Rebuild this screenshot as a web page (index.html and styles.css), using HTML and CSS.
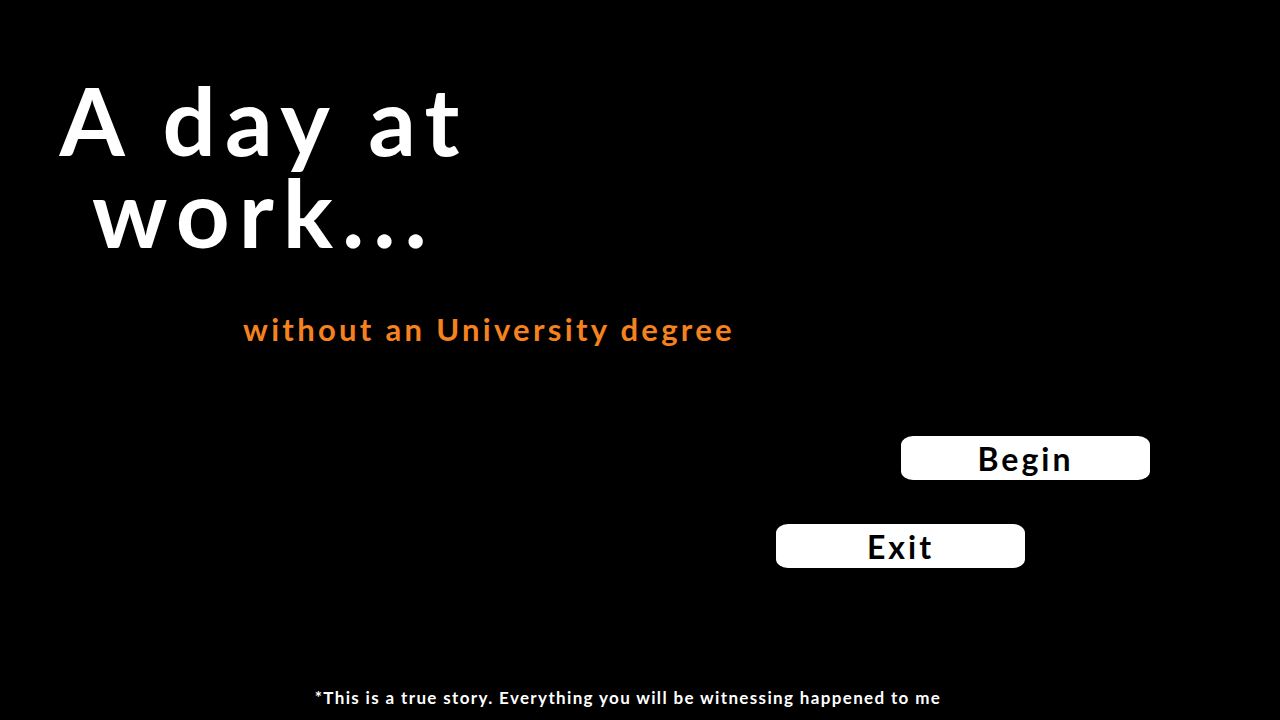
FILE: index.html
```html
<!DOCTYPE html>
<html lang="en">
<head>
  <meta charset="UTF-8">
  <meta name="viewport" content="width=device-width, initial-scale=1">
  <title>A day at work...</title>
  <link rel="stylesheet" href="styles.css">
</head>
<body>

  <main class="title-screen">
    <h1 class="title">A day at<br>work...</h1>
    <p class="subtitle">without an University degree</p>

    <div class="menu">
      <button class="menu-btn begin-btn">Begin</button>
      <button class="menu-btn exit-btn">Exit</button>
    </div>

    <p class="footnote">*This is a true story. Everything you will be witnessing happened to me</p>
  </main>

</body>
</html>
```

FILE: styles.css
```css
* {
  box-sizing: border-box;
}

body {
  margin: 0;
  background: #000;
  font-family: 'Lato', 'Noto Sans', sans-serif;
  color: #fff;
}

.title-screen {
  height: 100vh;
  display: flex;
  flex-direction: column;
  align-items: flex-start;
  padding-top: 74px;
}

.title {
  margin: 0 0 0 56px;
  width: 416px;
  font-size: 94px;
  font-weight: 700;
  line-height: 92px;
  letter-spacing: 9px;
  text-align: center;
}

.subtitle {
  margin: 52px 0 0 243px;
  font-size: 31px;
  font-weight: 700;
  letter-spacing: 3.3px;
  color: #f5821f;
}

.menu {
  display: flex;
  flex-direction: column;
  gap: 44px;
  margin-top: 88px;
}

.menu-btn {
  width: 249px;
  height: 44px;
  border: none;
  border-radius: 12px / 9px;
  background: #fff;
  color: #000;
  font-family: inherit;
  font-size: 32px;
  font-weight: 700;
  letter-spacing: 3px;
  padding: 0;
  cursor: pointer;
}

.begin-btn {
  margin-left: 901px;
}

.exit-btn {
  margin-left: 776px;
}

.footnote {
  margin: auto 0 12px;
  align-self: center;
  padding-right: 24px;
  font-size: 17px;
  font-weight: 700;
  letter-spacing: 1.35px;
}
```
